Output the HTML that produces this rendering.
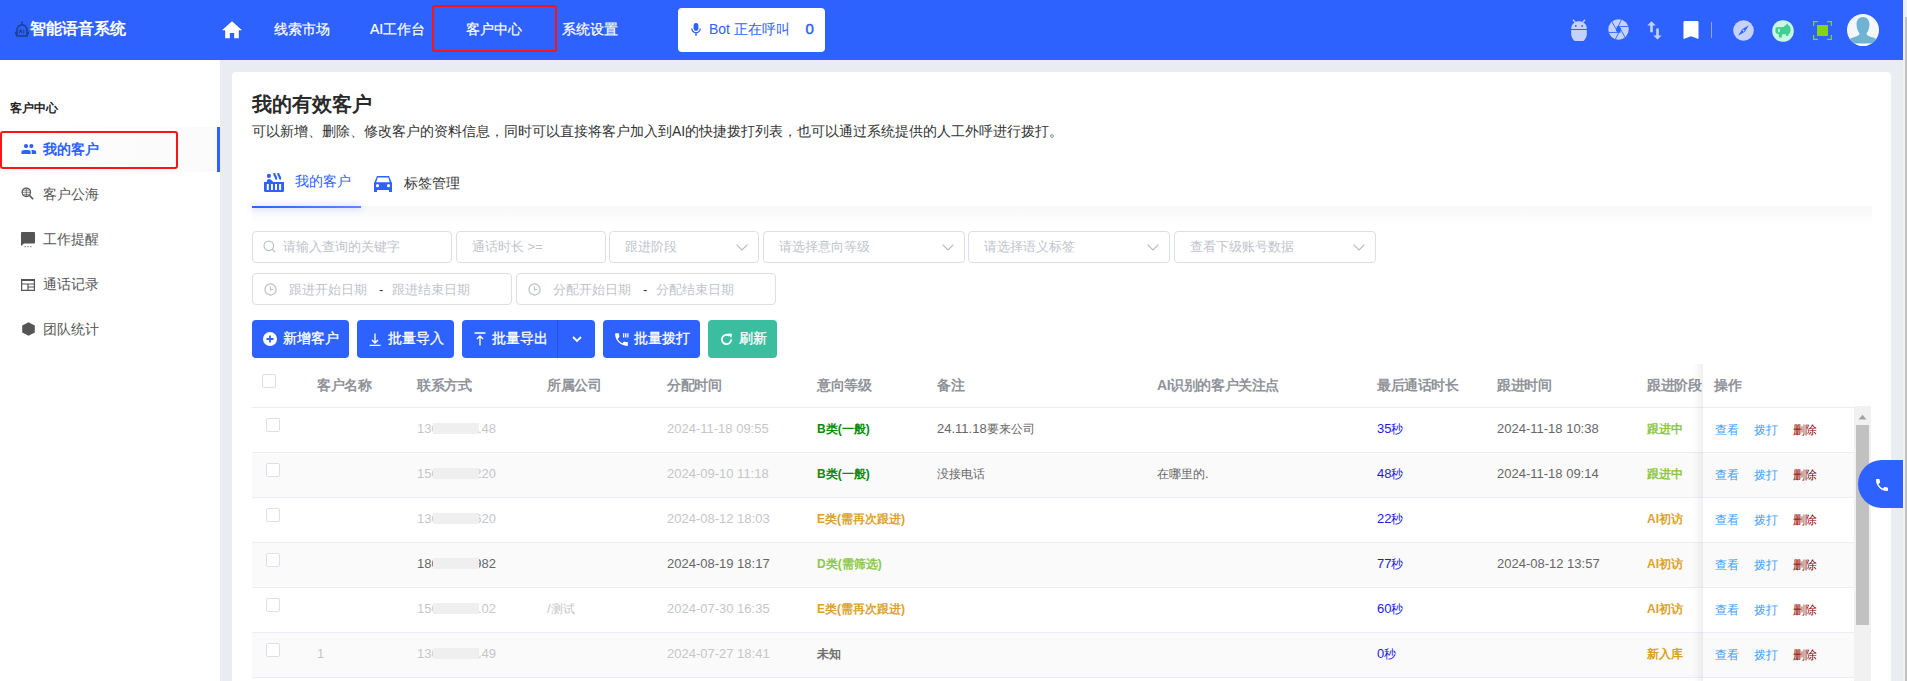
<!DOCTYPE html><html><head><meta charset="utf-8"><title>智能语音系统</title><style>
*{margin:0;padding:0;box-sizing:border-box}
html,body{width:1907px;height:681px;overflow:hidden;background:#e9ecf0;font-family:"Liberation Sans",sans-serif}
.a{position:absolute}
.t{position:absolute;white-space:nowrap;line-height:20px}
svg{display:block}
</style></head><body>
<div class="a" style="left:1903px;top:0px;width:4px;height:681px;background:#f1f1f1"></div>
<div class="a" style="left:1904.5px;top:17px;width:2.5px;height:664px;background:#c1c1c1"></div>
<div class="a" style="left:0px;top:0px;width:1903px;height:60px;background:#2e62ff"></div>
<svg class="a" style="left:14.5px;top:21px" width="14" height="16" viewBox="0 0 14 16">
<line x1="7" y1="1.5" x2="7" y2="4" stroke="#1c4296" stroke-width="1"/>
<circle cx="7" cy="1.4" r="1" fill="#1c4296"/>
<path d="M2 14.8 L2 8.9 A5 5 0 0 1 12 8.9 L12 14.8 Z" fill="none" stroke="#1c4296" stroke-width="1.7"/>
<rect x="0" y="10.6" width="2" height="3" rx="0.9" fill="#1c4296"/><rect x="12" y="10.6" width="2" height="3" rx="0.9" fill="#1c4296"/>
<path d="M4.2 12 L5.6 8.6 L7 12 M8.8 8.6 V11.2 Q8.8 12 8 12" fill="none" stroke="#1c4296" stroke-width="1.1"/>
</svg>
<div class="t" style="left:30px;top:16.5px;font-size:16px;color:#fff;font-weight:bold;line-height:24px">智能语音系统</div>
<svg class="a" style="left:222px;top:20.5px" width="20" height="18" viewBox="0 0 20 18">
<path d="M10 0.3 L20 9.2 L16.8 9.2 L16.8 17.3 L12.2 17.3 L12.2 12 L7.8 12 L7.8 17.3 L3.2 17.3 L3.2 9.2 L0 9.2 Z" fill="#fff"/></svg>
<div class="t" style="left:274px;top:19px;font-size:14px;color:#fff;font-weight:normal;-webkit-text-stroke:0.2px #fff">线索市场</div>
<div class="t" style="left:370px;top:19px;font-size:14px;color:#fff;font-weight:normal;-webkit-text-stroke:0.2px #fff">AI工作台</div>
<div class="t" style="left:466px;top:19px;font-size:14px;color:#fff;font-weight:normal;-webkit-text-stroke:0.2px #fff">客户中心</div>
<div class="t" style="left:562px;top:19px;font-size:14px;color:#fff;font-weight:normal;-webkit-text-stroke:0.2px #fff">系统设置</div>
<div class="a" style="left:432px;top:5.3px;width:125px;height:47px;border:2.8px solid #fa1414;border-radius:3px"></div>
<div class="a" style="left:678px;top:8px;width:147px;height:44px;background:#fff;border-radius:4px"></div>
<svg class="a" style="left:691px;top:23px" width="10" height="13" viewBox="0 0 10 13">
<rect x="2.6" y="0" width="4.8" height="8" rx="2.4" fill="#2e62ff"/>
<path d="M0.8 5.6 A4.2 4.2 0 0 0 9.2 5.6" fill="none" stroke="#2e62ff" stroke-width="1.3"/>
<line x1="5" y1="9.8" x2="5" y2="13" stroke="#2e62ff" stroke-width="1.3"/></svg>
<div class="t" style="left:709px;top:19px;font-size:14px;color:#2e62ff;font-weight:normal;">Bot 正在呼叫</div>
<div class="t" style="left:805.5px;top:18.5px;font-size:15px;color:#2e62ff;font-weight:normal;-webkit-text-stroke:0.5px #2e62ff">0</div>
<svg class="a" style="left:1571px;top:19px" width="16" height="22" viewBox="0 0 16 22">
<line x1="2" y1="0.8" x2="4.2" y2="3.2" stroke="#c5d2ff" stroke-width="1.3"/><line x1="14" y1="0.8" x2="11.8" y2="3.2" stroke="#c5d2ff" stroke-width="1.3"/>
<path d="M0.2 10 C0.2 -0.3 15.8 -0.3 15.8 10 Z" fill="#c5d2ff"/>
<circle cx="4.8" cy="7" r="0.9" fill="#2e62ff"/><circle cx="11.2" cy="7" r="0.9" fill="#2e62ff"/>
<path d="M0.2 11 H15.8 V15.5 A6.5 6.5 0 0 1 0.2 15.5 Z" fill="#c5d2ff"/></svg>
<svg class="a" style="left:1607.8px;top:19px" width="21" height="21" viewBox="0 0 21 21">
<defs><clipPath id="ap"><circle cx="10.5" cy="10.5" r="10.2"/></clipPath></defs>
<circle cx="10.5" cy="10.5" r="10.2" fill="#c5d2ff"/>
<g clip-path="url(#ap)" stroke="#2e62ff" stroke-width="0.9">
<line x1="13.8" y1="0" x2="8.5" y2="11"/><line x1="21" y1="7.5" x2="8.6" y2="7.6"/><line x1="17.5" y1="19" x2="11.2" y2="8"/>
<line x1="7" y1="21" x2="12.5" y2="10"/><line x1="0" y1="13.5" x2="12.4" y2="13.4"/><line x1="3.5" y1="2" x2="9.8" y2="13"/></g>
<circle cx="10.5" cy="10.5" r="2.6" fill="#2e62ff"/></svg>
<svg class="a" style="left:1647px;top:20.5px" width="16" height="19" viewBox="0 0 16 19">
<path d="M4.5 0.2 L8.7 4.4 H5.8 V11.2 H3.2 V4.4 H0.3 Z" fill="#c5d2ff"/>
<path d="M10.5 18.6 L14.6 14.5 H11.8 V7.5 H9.2 V14.5 H6.4 Z" fill="#c5d2ff"/></svg>
<svg class="a" style="left:1683px;top:21px" width="16" height="18" viewBox="0 0 16 18">
<path d="M0.5 1.2 Q0.5 0 1.7 0 H14.3 Q15.5 0 15.5 1.2 V18 L8 15.2 L0.5 18 Z" fill="#fff"/></svg>
<div class="a" style="left:1711px;top:22px;width:1px;height:16px;background:#9aa3b8"></div>
<svg class="a" style="left:1732.5px;top:19.5px" width="21" height="21" viewBox="0 0 21 21">
<circle cx="10.5" cy="10.5" r="10.3" fill="#c5d2ff"/>
<path d="M15.8 5.2 L11.8 11.8 L5.2 15.8 L9.2 9.2 Z" fill="#2e62ff"/><circle cx="10.5" cy="10.5" r="1" fill="#c5d2ff"/></svg>
<svg class="a" style="left:1772px;top:19.5px" width="22" height="22" viewBox="0 0 22 22">
<circle cx="11" cy="11" r="10.8" fill="#c9f7e3"/>
<path d="M3.5 8.5 Q3.5 7.3 4.8 7.3 L11.5 7 Q14 4.5 15.5 3.5 L16 4.8 Q18.8 6.5 18.6 10.5 Q18.4 13.5 16.5 14 L16.2 16 H14.2 L14 14.2 L10 14.2 L9.8 17.5 H7 L6.7 14 Q3.5 13.8 3.5 11.5 Z" fill="#3fcf8e"/>
<rect x="6.2" y="9" width="1.5" height="3.2" fill="#e8fff3"/></svg>
<svg class="a" style="left:1813px;top:21px" width="19" height="19" viewBox="0 0 19 19">
<path d="M0.6 5 V0.6 H5 M14 0.6 H18.4 V5 M18.4 14 V18.4 H14 M5 18.4 H0.6 V14" fill="none" stroke="#7ed321" stroke-width="1.3"/>
<rect x="4" y="4" width="11" height="11" fill="#82d414"/></svg>
<svg class="a" style="left:1847px;top:13.8px" width="32" height="32" viewBox="0 0 32 32">
<defs><clipPath id="av"><circle cx="16" cy="16" r="16"/></clipPath></defs>
<circle cx="16" cy="16" r="16" fill="#f4f7f9"/>
<g clip-path="url(#av)"><path d="M16 3 C20 3 22.5 6 22.5 10.5 C22.5 15 20.5 18 19.5 19.5 C19.5 21 21 22 26 23.5 C30 24.8 31 26.5 31 28 V30 H1 V28 C1 26.5 2 24.8 6 23.5 C11 22 12.5 21 12.5 19.5 C11.5 18 9.5 15 9.5 10.5 C9.5 6 12 3 16 3 Z" fill="#6fb3d3"/>
<rect x="0" y="29.5" width="32" height="3" fill="#fff"/></g></svg>
<div class="a" style="left:0px;top:60px;width:220px;height:621px;background:#fff"></div>
<div class="t" style="left:10px;top:98px;font-size:12px;color:#222;font-weight:bold;">客户中心</div>
<div class="a" style="left:0px;top:127px;width:217px;height:45px;background:linear-gradient(90deg,#fff 0%,#fafafa 100%)"></div>
<div class="a" style="left:217px;top:127px;width:3px;height:45px;background:#2e62ff"></div>
<div class="a" style="left:0px;top:130.5px;width:177.5px;height:38.5px;border:2.8px solid #fa1414;border-radius:3px"></div>
<svg class="a" style="left:20.5px;top:144px" width="16" height="10" viewBox="0 0 16 10">
<circle cx="5" cy="2.1" r="2.1" fill="#2e62ff"/><circle cx="10.4" cy="2.1" r="2.1" fill="#2e62ff"/>
<path d="M0.4 10 V8.2 Q0.4 6 3.5 6 H6.6 Q9.7 6 9.7 8.2 V10 Z" fill="#2e62ff"/>
<path d="M10.8 10 V8 Q10.8 6.9 10.2 6 H12 Q15.2 6 15.2 8.2 V10 Z" fill="#2e62ff"/></svg>
<svg class="a" style="left:21px;top:187px" width="13" height="13" viewBox="0 0 13 13">
<circle cx="5.3" cy="5.3" r="4.2" fill="none" stroke="#555" stroke-width="1.3"/>
<path d="M1.5 5.3 H9.1 M5.3 1.5 V9.1 M2.3 3.2 H8.3 M2.3 7.4 H8.3" stroke="#555" stroke-width="0.7"/>
<line x1="8.4" y1="8.4" x2="12.2" y2="12.2" stroke="#555" stroke-width="1.5"/></svg>
<svg class="a" style="left:21px;top:232px" width="14" height="16" viewBox="0 0 14 16">
<path d="M1 0 H13 Q14 0 14 1 V10.5 Q14 11.5 13 11.5 H3 L0 14 V1 Q0 0 1 0 Z" fill="#555"/>
<rect x="3.6" y="14.2" width="1.2" height="1" fill="#555"/><rect x="6.4" y="14.2" width="1.2" height="1" fill="#555"/><rect x="9.2" y="14.2" width="1.2" height="1" fill="#555"/></svg>
<svg class="a" style="left:21px;top:278.5px" width="14" height="12" viewBox="0 0 14 12">
<path d="M0.6 1.4 H13.4 V11.4 H0.6 Z" fill="none" stroke="#555" stroke-width="1.2"/>
<rect x="0" y="0" width="14" height="1.6" fill="#555"/>
<path d="M0.6 5 H13.4 M7 5 V11.4 M7 8 H13.4" stroke="#555" stroke-width="1.2"/></svg>
<svg class="a" style="left:21.5px;top:322px" width="13" height="14" viewBox="0 0 13 14">
<path d="M6.5 0.2 L12.8 3.6 V10.4 L6.5 13.8 L0.2 10.4 V3.6 Z" fill="#555"/></svg>
<div class="t" style="left:43px;top:139px;font-size:14px;color:#2e62ff;font-weight:bold;">我的客户</div>
<div class="t" style="left:43px;top:184px;font-size:14px;color:#555;font-weight:normal;">客户公海</div>
<div class="t" style="left:43px;top:229px;font-size:14px;color:#555;font-weight:normal;">工作提醒</div>
<div class="t" style="left:43px;top:274px;font-size:14px;color:#555;font-weight:normal;">通话记录</div>
<div class="t" style="left:43px;top:319px;font-size:14px;color:#555;font-weight:normal;">团队统计</div>
<div class="a" style="left:232px;top:72px;width:1659px;height:640px;background:#fff;border-radius:4px"></div>
<div class="t" style="left:252px;top:88.6px;font-size:20px;color:#2a2a2a;font-weight:bold;line-height:30px">我的有效客户</div>
<div class="t" style="left:252px;top:121px;font-size:14px;color:#333;font-weight:normal;">可以新增、删除、修改客户的资料信息，同时可以直接将客户加入到AI的快捷拨打列表，也可以通过系统提供的人工外呼进行拨打。</div>
<div class="a" style="left:252px;top:206px;width:1620px;height:20px;background:linear-gradient(180deg,#f8f8f9 0%,#fff 100%)"></div>
<div class="a" style="left:252px;top:206px;width:109px;height:2px;background:linear-gradient(90deg,#2e62ff,#5f87ff);box-shadow:0 0 7px 1px rgba(46,98,255,0.22)"></div>
<svg class="a" style="left:264px;top:173px" width="20" height="19" viewBox="0 0 20 19">
<circle cx="4.9" cy="2.9" r="2.1" fill="#2e62ff"/>
<path d="M2.8 9 Q2.8 6 5.2 6 Q7 6 9.2 9 Z" fill="#2e62ff"/>
<path d="M0 9 H20 V17.5 Q20 19 18.5 19 H1.5 Q0 19 0 17.5 Z" fill="#2e62ff"/>
<rect x="2.8" y="11" width="2" height="6" fill="#fff"/><rect x="7" y="11" width="1.9" height="6" fill="#fff"/><rect x="11" y="11" width="2" height="6" fill="#fff"/><rect x="15.1" y="11" width="2" height="6" fill="#fff"/>
<path d="M10.5 0 Q10 1.5 11.2 3 Q12.4 4.5 12 6.5 M14.5 0 Q14 1.5 15.2 3 Q16.4 4.5 16 6.5" fill="none" stroke="#2e62ff" stroke-width="2.1"/></svg>
<svg class="a" style="left:374px;top:175.8px" width="18" height="16" viewBox="0 0 18 16">
<path d="M3 0 H15 L17.2 5.5 Q18 6 18 7 V16 H15 V14 H3 V16 H0 V7 Q0 6 0.8 5.5 Z" fill="#2e62ff"/>
<path d="M3.7 1.5 H14.3 L15.8 6.2 H2.2 Z" fill="#fff"/>
<circle cx="3.5" cy="9.7" r="1.6" fill="#fff"/><circle cx="14.5" cy="9.7" r="1.6" fill="#fff"/></svg>
<div class="t" style="left:295px;top:171px;font-size:14px;color:#2e62ff;font-weight:normal;">我的客户</div>
<div class="t" style="left:404px;top:173px;font-size:14px;color:#333;font-weight:normal;">标签管理</div>
<div class="a" style="left:252px;top:231px;width:200px;height:32px;border:1px solid #dcdfe6;border-radius:4px;background:#fff"></div>
<div class="t" style="left:283px;top:236.5px;font-size:13px;color:#c0c4cc;font-weight:normal;">请输入查询的关键字</div>
<svg class="a" style="left:263px;top:240px" width="13" height="13" viewBox="0 0 13 13"><circle cx="5.8" cy="5.8" r="4.8" fill="none" stroke="#b8bcc4" stroke-width="1.1"/><line x1="9.3" y1="9.3" x2="12" y2="12" stroke="#b8bcc4" stroke-width="1.1"/></svg>
<div class="a" style="left:456px;top:231px;width:150px;height:32px;border:1px solid #dcdfe6;border-radius:4px;background:#fff"></div>
<div class="t" style="left:472px;top:236.5px;font-size:13px;color:#c0c4cc;font-weight:normal;">通话时长 &gt;=</div>
<div class="a" style="left:609px;top:231px;width:150px;height:32px;border:1px solid #dcdfe6;border-radius:4px;background:#fff"></div>
<div class="t" style="left:625px;top:236.5px;font-size:13px;color:#c0c4cc;font-weight:normal;">跟进阶段</div>
<svg class="a" style="left:735.5px;top:243.5px" width="12" height="7" viewBox="0 0 12 7"><path d="M0.6 0.6 L6 6 L11.4 0.6" fill="none" stroke="#b4b8c2" stroke-width="1.1"/></svg>
<div class="a" style="left:763px;top:231px;width:202px;height:32px;border:1px solid #dcdfe6;border-radius:4px;background:#fff"></div>
<div class="t" style="left:779px;top:236.5px;font-size:13px;color:#c0c4cc;font-weight:normal;">请选择意向等级</div>
<svg class="a" style="left:941.5px;top:243.5px" width="12" height="7" viewBox="0 0 12 7"><path d="M0.6 0.6 L6 6 L11.4 0.6" fill="none" stroke="#b4b8c2" stroke-width="1.1"/></svg>
<div class="a" style="left:968px;top:231px;width:202px;height:32px;border:1px solid #dcdfe6;border-radius:4px;background:#fff"></div>
<div class="t" style="left:984px;top:236.5px;font-size:13px;color:#c0c4cc;font-weight:normal;">请选择语义标签</div>
<svg class="a" style="left:1146.5px;top:243.5px" width="12" height="7" viewBox="0 0 12 7"><path d="M0.6 0.6 L6 6 L11.4 0.6" fill="none" stroke="#b4b8c2" stroke-width="1.1"/></svg>
<div class="a" style="left:1174px;top:231px;width:202px;height:32px;border:1px solid #dcdfe6;border-radius:4px;background:#fff"></div>
<div class="t" style="left:1190px;top:236.5px;font-size:13px;color:#c0c4cc;font-weight:normal;">查看下级账号数据</div>
<svg class="a" style="left:1352.5px;top:243.5px" width="12" height="7" viewBox="0 0 12 7"><path d="M0.6 0.6 L6 6 L11.4 0.6" fill="none" stroke="#b4b8c2" stroke-width="1.1"/></svg>
<div class="a" style="left:252px;top:273px;width:260px;height:32px;border:1px solid #dcdfe6;border-radius:4px;background:#fff"></div>
<svg class="a" style="left:264px;top:283px" width="13" height="13" viewBox="0 0 13 13"><circle cx="6.5" cy="6.5" r="5.6" fill="none" stroke="#b8bcc4" stroke-width="1.1"/><path d="M6.5 3.2 V6.8 H9.3" fill="none" stroke="#b8bcc4" stroke-width="1.1"/></svg>
<div class="t" style="left:289px;top:279.5px;font-size:13px;color:#c0c4cc;font-weight:normal;">跟进开始日期</div>
<div class="t" style="left:379px;top:279.5px;font-size:13px;color:#333;font-weight:normal;">-</div>
<div class="t" style="left:392px;top:279.5px;font-size:13px;color:#c0c4cc;font-weight:normal;">跟进结束日期</div>
<div class="a" style="left:516px;top:273px;width:260px;height:32px;border:1px solid #dcdfe6;border-radius:4px;background:#fff"></div>
<svg class="a" style="left:528px;top:283px" width="13" height="13" viewBox="0 0 13 13"><circle cx="6.5" cy="6.5" r="5.6" fill="none" stroke="#b8bcc4" stroke-width="1.1"/><path d="M6.5 3.2 V6.8 H9.3" fill="none" stroke="#b8bcc4" stroke-width="1.1"/></svg>
<div class="t" style="left:553px;top:279.5px;font-size:13px;color:#c0c4cc;font-weight:normal;">分配开始日期</div>
<div class="t" style="left:643px;top:279.5px;font-size:13px;color:#333;font-weight:normal;">-</div>
<div class="t" style="left:656px;top:279.5px;font-size:13px;color:#c0c4cc;font-weight:normal;">分配结束日期</div>
<div class="a" style="left:252px;top:320px;width:97px;height:38px;background:#2e62ff;border-radius:4px"></div>
<div class="t" style="left:283px;top:328px;font-size:14px;color:#fff;font-weight:normal;-webkit-text-stroke:0.3px #fff">新增客户</div>
<svg class="a" style="left:263px;top:332px" width="14" height="14" viewBox="0 0 14 14"><circle cx="7" cy="7" r="7" fill="#fff"/><path d="M3.5 7 H10.5 M7 3.5 V10.5" stroke="#2e62ff" stroke-width="1.8"/></svg>
<div class="a" style="left:357px;top:320px;width:97px;height:38px;background:#2e62ff;border-radius:4px"></div>
<div class="t" style="left:388px;top:328px;font-size:14px;color:#fff;font-weight:normal;-webkit-text-stroke:0.3px #fff">批量导入</div>
<svg class="a" style="left:369px;top:332.5px" width="12" height="13" viewBox="0 0 12 13"><path d="M6 0.5 V10 M3 7 L6 10 L9 7 M0.5 12.3 H11.5" fill="none" stroke="#fff" stroke-width="1.3"/></svg>
<div class="a" style="left:462px;top:320px;width:133px;height:38px;background:#2e62ff;border-radius:4px"></div>
<div class="t" style="left:492px;top:328px;font-size:14px;color:#fff;font-weight:normal;-webkit-text-stroke:0.3px #fff">批量导出</div>
<div class="a" style="left:557px;top:320px;width:1px;height:38px;background:#2552dd"></div>
<svg class="a" style="left:571.5px;top:335.5px" width="10" height="7" viewBox="0 0 10 7"><path d="M1 1 L5 5 L9 1" fill="none" stroke="#fff" stroke-width="1.8"/></svg>
<svg class="a" style="left:474px;top:331.5px" width="12" height="14" viewBox="0 0 12 14"><path d="M0.5 1 H11.5 M6 13.5 V4 M3 7 L6 4 L9 7" fill="none" stroke="#fff" stroke-width="1.3"/></svg>
<div class="a" style="left:603px;top:320px;width:97px;height:38px;background:#2e62ff;border-radius:4px"></div>
<div class="t" style="left:634px;top:328px;font-size:14px;color:#fff;font-weight:normal;-webkit-text-stroke:0.3px #fff">批量拨打</div>
<svg class="a" style="left:612.5px;top:330.5px" width="17" height="17" viewBox="0 0 24 24"><path fill="#fff" d="M6.6 10.8c1.4 2.8 3.8 5.1 6.6 6.6l2.2-2.2c.3-.3.7-.4 1-.2 1.1.4 2.3.6 3.6.6.6 0 1 .4 1 1V20c0 .6-.4 1-1 1C10.6 21 3 13.4 3 4c0-.6.4-1 1-1h3.5c.6 0 1 .4 1 1 0 1.3.2 2.5.6 3.6.1.3 0 .7-.2 1z"/><path d="M15 3 L15 9 M18 3 L18 9 M21 3 L21 9" stroke="#fff" stroke-width="1.8"/></svg>
<div class="a" style="left:708px;top:320px;width:69px;height:38px;background:#3bbea0;border-radius:4px"></div>
<div class="t" style="left:739px;top:328px;font-size:14px;color:#fff;font-weight:normal;-webkit-text-stroke:0.3px #fff">刷新</div>
<svg class="a" style="left:720px;top:332.5px" width="13" height="13" viewBox="0 0 12 12"><path d="M10.3 6 A4.3 4.3 0 1 1 8.8 2.7" fill="none" stroke="#fff" stroke-width="1.7"/><path d="M7 0.5 L11 0.8 L10.5 4.8 Z" fill="#fff"/></svg>
<div class="t" style="left:317px;top:375px;font-size:14px;color:#909399;font-weight:bold;letter-spacing:-0.4px">客户名称</div>
<div class="t" style="left:417px;top:375px;font-size:14px;color:#909399;font-weight:bold;letter-spacing:-0.4px">联系方式</div>
<div class="t" style="left:547px;top:375px;font-size:14px;color:#909399;font-weight:bold;letter-spacing:-0.4px">所属公司</div>
<div class="t" style="left:667px;top:375px;font-size:14px;color:#909399;font-weight:bold;letter-spacing:-0.4px">分配时间</div>
<div class="t" style="left:817px;top:375px;font-size:14px;color:#909399;font-weight:bold;letter-spacing:-0.4px">意向等级</div>
<div class="t" style="left:937px;top:375px;font-size:14px;color:#909399;font-weight:bold;letter-spacing:-0.4px">备注</div>
<div class="t" style="left:1157px;top:375px;font-size:14px;color:#909399;font-weight:bold;letter-spacing:-0.4px">AI识别的客户关注点</div>
<div class="t" style="left:1377px;top:375px;font-size:14px;color:#909399;font-weight:bold;letter-spacing:-0.4px">最后通话时长</div>
<div class="t" style="left:1497px;top:375px;font-size:14px;color:#909399;font-weight:bold;letter-spacing:-0.4px">跟进时间</div>
<div class="t" style="left:1647px;top:375px;font-size:14px;color:#909399;font-weight:bold;letter-spacing:-0.4px">跟进阶段</div>
<div class="a" style="left:262px;top:374px;width:14px;height:14px;border:1px solid #dcdfe6;border-radius:2px;background:#fff"></div>
<div class="a" style="left:252px;top:407px;width:1602px;height:1px;background:#ebeef5"></div>
<div class="a" style="left:252px;top:408px;width:1602px;height:44px;background:#fff"></div>
<div class="a" style="left:252px;top:452px;width:1602px;height:1px;background:#ebeef5"></div>
<div class="a" style="left:266px;top:418px;width:14px;height:14px;border:1px solid #dcdfe6;border-radius:2px;background:#fff"></div>
<div class="t" style="left:417px;top:418.5px;font-size:13px;color:#c5c6c8;font-weight:normal;">1300</div>
<div class="t" style="left:396px;width:100px;text-align:right;top:418.5px;font-size:13px;color:#c5c6c8">00.48</div>
<div class="a" style="left:433px;top:422.5px;width:46px;height:11.5px;background:#efefef"></div>
<div class="t" style="left:667px;top:418.5px;font-size:13px;color:#c5c6c8;font-weight:normal;">2024-11-18 09:55</div>
<div class="t" style="left:817px;top:418.5px;font-size:12px;color:#0a8a0a;font-weight:bold;">B类(一般)</div>
<div class="t" style="left:937px;top:418.5px;font-size:13px;color:#666666;font-weight:normal;">24.11.18<span style="font-size:12px">要来公司</span></div>
<div class="t" style="left:1377px;top:418.5px;font-size:13px;color:#1a1ae6;font-weight:normal;">35<span style="font-size:12px">秒</span></div>
<div class="t" style="left:1497px;top:418.5px;font-size:13px;color:#666666;font-weight:normal;">2024-11-18 10:38</div>
<div class="t" style="left:1647px;top:418.5px;font-size:12px;color:#8cc63f;font-weight:bold;">跟进中</div>
<div class="a" style="left:252px;top:453px;width:1602px;height:44px;background:#fafafa"></div>
<div class="a" style="left:252px;top:497px;width:1602px;height:1px;background:#ebeef5"></div>
<div class="a" style="left:266px;top:463px;width:14px;height:14px;border:1px solid #dcdfe6;border-radius:2px;background:#fff"></div>
<div class="t" style="left:417px;top:463.5px;font-size:13px;color:#c5c6c8;font-weight:normal;">1500</div>
<div class="t" style="left:396px;width:100px;text-align:right;top:463.5px;font-size:13px;color:#c5c6c8">00220</div>
<div class="a" style="left:433px;top:467.5px;width:46px;height:11.5px;background:#efefef"></div>
<div class="t" style="left:667px;top:463.5px;font-size:13px;color:#c5c6c8;font-weight:normal;">2024-09-10 11:18</div>
<div class="t" style="left:817px;top:463.5px;font-size:12px;color:#0a8a0a;font-weight:bold;">B类(一般)</div>
<div class="t" style="left:937px;top:463.5px;font-size:13px;color:#666666;font-weight:normal;"><span style="font-size:12px">没接电话</span></div>
<div class="t" style="left:1157px;top:463.5px;font-size:13px;color:#666666;font-weight:normal;"><span style="font-size:12px">在哪里的</span>.</div>
<div class="t" style="left:1377px;top:463.5px;font-size:13px;color:#1a1ae6;font-weight:normal;">48<span style="font-size:12px">秒</span></div>
<div class="t" style="left:1497px;top:463.5px;font-size:13px;color:#666666;font-weight:normal;">2024-11-18 09:14</div>
<div class="t" style="left:1647px;top:463.5px;font-size:12px;color:#8cc63f;font-weight:bold;">跟进中</div>
<div class="a" style="left:252px;top:498px;width:1602px;height:44px;background:#fff"></div>
<div class="a" style="left:252px;top:542px;width:1602px;height:1px;background:#ebeef5"></div>
<div class="a" style="left:266px;top:508px;width:14px;height:14px;border:1px solid #dcdfe6;border-radius:2px;background:#fff"></div>
<div class="t" style="left:417px;top:508.5px;font-size:13px;color:#c5c6c8;font-weight:normal;">1300</div>
<div class="t" style="left:396px;width:100px;text-align:right;top:508.5px;font-size:13px;color:#c5c6c8">00620</div>
<div class="a" style="left:433px;top:512.5px;width:46px;height:11.5px;background:#efefef"></div>
<div class="t" style="left:667px;top:508.5px;font-size:13px;color:#c5c6c8;font-weight:normal;">2024-08-12 18:03</div>
<div class="t" style="left:817px;top:508.5px;font-size:12px;color:#dba22e;font-weight:bold;">E类(需再次跟进)</div>
<div class="t" style="left:1377px;top:508.5px;font-size:13px;color:#1a1ae6;font-weight:normal;">22<span style="font-size:12px">秒</span></div>
<div class="t" style="left:1647px;top:508.5px;font-size:12px;color:#dba22e;font-weight:bold;">AI初访</div>
<div class="a" style="left:252px;top:543px;width:1602px;height:44px;background:#fafafa"></div>
<div class="a" style="left:252px;top:587px;width:1602px;height:1px;background:#ebeef5"></div>
<div class="a" style="left:266px;top:553px;width:14px;height:14px;border:1px solid #dcdfe6;border-radius:2px;background:#fff"></div>
<div class="t" style="left:417px;top:553.5px;font-size:13px;color:#666666;font-weight:normal;">1800</div>
<div class="t" style="left:396px;width:100px;text-align:right;top:553.5px;font-size:13px;color:#666666">00982</div>
<div class="a" style="left:433px;top:557.5px;width:46px;height:11.5px;background:#efefef"></div>
<div class="t" style="left:667px;top:553.5px;font-size:13px;color:#666666;font-weight:normal;">2024-08-19 18:17</div>
<div class="t" style="left:817px;top:553.5px;font-size:12px;color:#8cc84a;font-weight:bold;">D类(需筛选)</div>
<div class="t" style="left:1377px;top:553.5px;font-size:13px;color:#1a1ae6;font-weight:normal;">77<span style="font-size:12px">秒</span></div>
<div class="t" style="left:1497px;top:553.5px;font-size:13px;color:#666666;font-weight:normal;">2024-08-12 13:57</div>
<div class="t" style="left:1647px;top:553.5px;font-size:12px;color:#dba22e;font-weight:bold;">AI初访</div>
<div class="a" style="left:252px;top:588px;width:1602px;height:44px;background:#fff"></div>
<div class="a" style="left:252px;top:632px;width:1602px;height:1px;background:#ebeef5"></div>
<div class="a" style="left:266px;top:598px;width:14px;height:14px;border:1px solid #dcdfe6;border-radius:2px;background:#fff"></div>
<div class="t" style="left:417px;top:598.5px;font-size:13px;color:#c5c6c8;font-weight:normal;">1500</div>
<div class="t" style="left:396px;width:100px;text-align:right;top:598.5px;font-size:13px;color:#c5c6c8">00.02</div>
<div class="a" style="left:433px;top:602.5px;width:46px;height:11.5px;background:#efefef"></div>
<div class="t" style="left:547px;top:598.5px;font-size:13px;color:#c5c6c8;font-weight:normal;">/<span style="font-size:12px">测试</span></div>
<div class="t" style="left:667px;top:598.5px;font-size:13px;color:#c5c6c8;font-weight:normal;">2024-07-30 16:35</div>
<div class="t" style="left:817px;top:598.5px;font-size:12px;color:#dba22e;font-weight:bold;">E类(需再次跟进)</div>
<div class="t" style="left:1377px;top:598.5px;font-size:13px;color:#1a1ae6;font-weight:normal;">60<span style="font-size:12px">秒</span></div>
<div class="t" style="left:1647px;top:598.5px;font-size:12px;color:#dba22e;font-weight:bold;">AI初访</div>
<div class="a" style="left:252px;top:633px;width:1602px;height:44px;background:#fafafa"></div>
<div class="a" style="left:252px;top:677px;width:1602px;height:1px;background:#ebeef5"></div>
<div class="a" style="left:266px;top:643px;width:14px;height:14px;border:1px solid #dcdfe6;border-radius:2px;background:#fff"></div>
<div class="t" style="left:317px;top:643.5px;font-size:13px;color:#c5c6c8;font-weight:normal;">1</div>
<div class="t" style="left:417px;top:643.5px;font-size:13px;color:#c5c6c8;font-weight:normal;">1300</div>
<div class="t" style="left:396px;width:100px;text-align:right;top:643.5px;font-size:13px;color:#c5c6c8">00.49</div>
<div class="a" style="left:433px;top:647.5px;width:46px;height:11.5px;background:#efefef"></div>
<div class="t" style="left:667px;top:643.5px;font-size:13px;color:#c5c6c8;font-weight:normal;">2024-07-27 18:41</div>
<div class="t" style="left:817px;top:643.5px;font-size:12px;color:#6e6e6e;font-weight:bold;">未知</div>
<div class="t" style="left:1377px;top:643.5px;font-size:13px;color:#1a1ae6;font-weight:normal;">0<span style="font-size:12px">秒</span></div>
<div class="t" style="left:1647px;top:643.5px;font-size:12px;color:#d9a21a;font-weight:bold;">新入库</div>
<div class="a" style="left:252px;top:678px;width:1602px;height:44px;background:#fff"></div>
<div class="a" style="left:252px;top:722px;width:1602px;height:1px;background:#ebeef5"></div>
<div class="a" style="left:1693px;top:364px;width:10px;height:317px;background:linear-gradient(90deg,rgba(0,0,0,0),rgba(0,0,0,0.06))"></div>
<div class="a" style="left:1703px;top:364px;width:151px;height:43px;background:#fff"></div>
<div class="t" style="left:1714px;top:375px;font-size:14px;color:#909399;font-weight:bold;letter-spacing:-0.4px">操作</div>
<div class="a" style="left:1703px;top:408px;width:151px;height:44px;background:#fff"></div>
<div class="a" style="left:1703px;top:452px;width:151px;height:1px;background:#ebeef5"></div>
<div class="t" style="left:1715px;top:419.5px;font-size:12px;color:#409eff;font-weight:normal;">查看</div>
<div class="t" style="left:1754px;top:419.5px;font-size:12px;color:#409eff;font-weight:normal;">拨打</div>
<div class="t" style="left:1793px;top:419.5px;font-size:12px;color:#8b0000;font-weight:normal;">删除</div>
<div class="a" style="left:1703px;top:453px;width:151px;height:44px;background:#fafafa"></div>
<div class="a" style="left:1703px;top:497px;width:151px;height:1px;background:#ebeef5"></div>
<div class="t" style="left:1715px;top:464.5px;font-size:12px;color:#409eff;font-weight:normal;">查看</div>
<div class="t" style="left:1754px;top:464.5px;font-size:12px;color:#409eff;font-weight:normal;">拨打</div>
<div class="t" style="left:1793px;top:464.5px;font-size:12px;color:#8b0000;font-weight:normal;">删除</div>
<div class="a" style="left:1703px;top:498px;width:151px;height:44px;background:#fff"></div>
<div class="a" style="left:1703px;top:542px;width:151px;height:1px;background:#ebeef5"></div>
<div class="t" style="left:1715px;top:509.5px;font-size:12px;color:#409eff;font-weight:normal;">查看</div>
<div class="t" style="left:1754px;top:509.5px;font-size:12px;color:#409eff;font-weight:normal;">拨打</div>
<div class="t" style="left:1793px;top:509.5px;font-size:12px;color:#8b0000;font-weight:normal;">删除</div>
<div class="a" style="left:1703px;top:543px;width:151px;height:44px;background:#fafafa"></div>
<div class="a" style="left:1703px;top:587px;width:151px;height:1px;background:#ebeef5"></div>
<div class="t" style="left:1715px;top:554.5px;font-size:12px;color:#409eff;font-weight:normal;">查看</div>
<div class="t" style="left:1754px;top:554.5px;font-size:12px;color:#409eff;font-weight:normal;">拨打</div>
<div class="t" style="left:1793px;top:554.5px;font-size:12px;color:#8b0000;font-weight:normal;">删除</div>
<div class="a" style="left:1703px;top:588px;width:151px;height:44px;background:#fff"></div>
<div class="a" style="left:1703px;top:632px;width:151px;height:1px;background:#ebeef5"></div>
<div class="t" style="left:1715px;top:599.5px;font-size:12px;color:#409eff;font-weight:normal;">查看</div>
<div class="t" style="left:1754px;top:599.5px;font-size:12px;color:#409eff;font-weight:normal;">拨打</div>
<div class="t" style="left:1793px;top:599.5px;font-size:12px;color:#8b0000;font-weight:normal;">删除</div>
<div class="a" style="left:1703px;top:633px;width:151px;height:44px;background:#fafafa"></div>
<div class="a" style="left:1703px;top:677px;width:151px;height:1px;background:#ebeef5"></div>
<div class="t" style="left:1715px;top:644.5px;font-size:12px;color:#409eff;font-weight:normal;">查看</div>
<div class="t" style="left:1754px;top:644.5px;font-size:12px;color:#409eff;font-weight:normal;">拨打</div>
<div class="t" style="left:1793px;top:644.5px;font-size:12px;color:#8b0000;font-weight:normal;">删除</div>
<div class="a" style="left:1703px;top:678px;width:151px;height:44px;background:#fff"></div>
<div class="a" style="left:1703px;top:722px;width:151px;height:1px;background:#ebeef5"></div>
<div class="a" style="left:1703px;top:407px;width:151px;height:1px;background:#ebeef5"></div>
<div class="a" style="left:1854px;top:406px;width:17px;height:275px;background:#f1f1f1"></div>
<svg class="a" style="left:1858px;top:414px" width="9" height="6" viewBox="0 0 9 6"><path d="M0.5 5.5 L4.5 0.8 L8.5 5.5 Z" fill="#a3a3a3"/></svg>
<div class="a" style="left:1856px;top:425px;width:13px;height:200px;background:#c1c1c1"></div>
<div class="a" style="left:1858px;top:460px;width:45px;height:48px;background:#2e62ff;border-radius:24px 0 0 24px"></div>
<svg class="a" style="left:1873.5px;top:476.5px" width="16" height="16" viewBox="0 0 24 24"><path fill="#fff" d="M6.6 10.8c1.4 2.8 3.8 5.1 6.6 6.6l2.2-2.2c.3-.3.7-.4 1-.2 1.1.4 2.3.6 3.6.6.6 0 1 .4 1 1V20c0 .6-.4 1-1 1C10.6 21 3 13.4 3 4c0-.6.4-1 1-1h3.5c.6 0 1 .4 1 1 0 1.3.2 2.5.6 3.6.1.3 0 .7-.2 1z"/></svg>
</body></html>
